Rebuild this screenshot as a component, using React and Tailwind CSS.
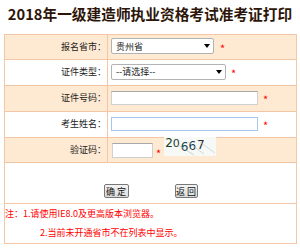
import React from "react";

const F = { fontFamily: '"Noto Sans CJK SC", "Noto Sans", sans-serif' };

function Star({ className = "" }) {
  return (
    <span className={"text-[#ff0000] text-[11px] leading-none pt-[4px] " + className}>*</span>
  );
}

function Select({ text, w }) {
  return (
    <div
      className={
        "h-[16px] border border-[#b3b3b3] rounded-[2px] bg-white flex items-center justify-between pl-[4px] pr-[3px] text-[9px] text-[#222] " +
        w
      }
    >
      <span className="leading-none">{text}</span>
      <span className="w-0 h-0 border-l-[3px] border-r-[3px] border-t-[4px] border-l-transparent border-r-transparent border-t-black" />
    </div>
  );
}

function Row({ label, bg, h, children, last }) {
  return (
    <div className={"flex border-[#f5c6a5] " + bg + " " + h + (last ? "" : " border-b")}>
      <div className="w-[103px] border-r border-[#f5c6a5] flex items-center justify-end pr-[1px] pb-[1px] text-[9px] text-[#222]">
        {label}
      </div>
      <div className="flex-1 flex items-center pl-[3px] pb-[2px]">{children}</div>
    </div>
  );
}

function Captcha() {
  return (
    <div className="relative w-[52px] h-[19px] bg-[#f7f9f7] ml-[3px] mb-[5px] flex items-start pl-[1px] text-[12px] leading-none font-['DejaVu_Sans']">
      <span className="text-[#15401d] mt-[0px]">2</span>
      <span className="text-[#1f3f30] mt-[1px] ml-[0px] text-[11px]">0</span>
      <span className="text-[#0f4447] mt-[4px] ml-[1px]">6</span>
      <span className="text-[#22394a] mt-[3px] ml-[0px]">6</span>
      <span className="text-[#2a2a2a] mt-[2px] ml-[1px]">7</span>
      <svg className="absolute left-0 top-0" width="52" height="19" viewBox="0 0 52 19">
        <line x1="14" y1="8" x2="30" y2="18" stroke="#b5b5b5" strokeWidth="0.6" />
        <line x1="24" y1="5" x2="40" y2="17" stroke="#bdbdbd" strokeWidth="0.6" />
        <line x1="33" y1="3" x2="51" y2="16" stroke="#c4c4c4" strokeWidth="0.6" />
      </svg>
    </div>
  );
}

export default function App() {
  return (
    <div className="w-[300px] h-[251px] bg-white" style={F}>
      <div className="h-[34px] flex items-center justify-center pb-[5px] font-bold text-[14.7px] text-[#2d1609] leading-none">
        2018年一级建造师执业资格考试准考证打印
      </div>
      <div className="ml-[4px] w-[293px] border border-[#f5c6a5]">
        <Row label="报名省市：" bg="bg-[#fee9d2]" h="h-[25px]">
          <Select text="贵州省" w="w-[103px]" />
          <Star className="ml-[6px]" />
        </Row>
        <Row label="证件类型：" bg="bg-white" h="h-[26px]">
          <Select text="--请选择--" w="w-[115px]" />
          <Star className="ml-[5px]" />
        </Row>
        <Row label="证件号码：" bg="bg-[#fee9d2]" h="h-[26px]">
          <div className="w-[147px] h-[14px] bg-white border border-[#d0d0d0] border-t-[#a8a8a8]" />
          <Star className="ml-[5px]" />
        </Row>
        <Row label="考生姓名：" bg="bg-white" h="h-[26px]">
          <div className="w-[147px] h-[14px] bg-white border border-[#a9c7e6]" />
          <Star className="ml-[5px]" />
        </Row>
        <Row label="验证码：" bg="bg-[#fee9d2]" h="h-[25px]">
          <div className="ml-[1px] mt-[2px] w-[41px] h-[15px] bg-white border border-[#d0d0d0] border-t-[#a8a8a8]" />
          <Star className="ml-[3px] pt-[8px]" />
          <Captcha />
        </Row>
        <div className="h-[41px] border-b border-[#f5c6a5] flex justify-center items-start pt-[21px] gap-[46px]">
          <div className="w-[25px] h-[14px] border border-[#777] rounded-[2px] bg-gradient-to-b from-[#f4f4f4] to-[#dcdcdc] flex items-center justify-center text-[9px] leading-none text-[#111]">
            确 定
          </div>
          <div className="w-[23px] h-[14px] border border-[#777] rounded-[2px] bg-gradient-to-b from-[#f4f4f4] to-[#dcdcdc] flex items-center justify-center text-[9px] leading-none text-[#111]">
            返 回
          </div>
        </div>
        <div className="h-[39px] text-[#ff0000] text-[9px] leading-[19px]">
          <div>注：1.请使用IE8.0及更高版本浏览器。</div>
          <div className="pl-[35px]">2.当前未开通省市不在列表中显示。</div>
        </div>
      </div>
    </div>
  );
}
